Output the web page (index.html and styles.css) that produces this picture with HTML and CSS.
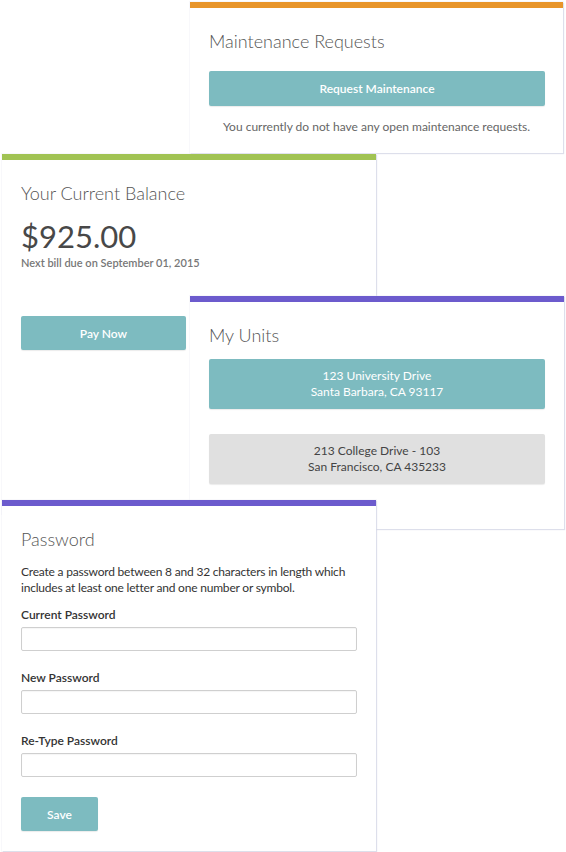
FILE: index.html
```html
<!DOCTYPE html>
<html>
<head>
<meta charset="utf-8">
<link rel="stylesheet" href="styles.css">
</head>
<body>
<div class="canvas">
  <section class="card card-maint">
    <h2 class="card-title">Maintenance Requests</h2>
    <button class="btn btn-wide">Request Maintenance</button>
    <p class="empty-note">You currently do not have any open maintenance requests.</p>
  </section>

  <section class="card card-balance">
    <h2 class="card-title">Your Current Balance</h2>
    <div class="amount">$925.00</div>
    <div class="due">Next bill due on September 01, 2015</div>
    <button class="btn btn-pay">Pay Now</button>
  </section>

  <section class="card card-units">
    <h2 class="card-title">My Units</h2>
    <div class="unit unit-active">123 University Drive<br>Santa Barbara, CA 93117</div>
    <div class="unit unit-other">213 College Drive - 103<br>San Francisco, CA 435233</div>
  </section>

  <section class="card card-password">
    <h2 class="card-title">Password</h2>
    <p class="desc">Create a password between 8 and 32 characters in length which includes at least one letter and one number or symbol.</p>
    <label class="field">
      <span class="field-label">Current Password</span>
      <input class="field-input" type="password">
    </label>
    <label class="field">
      <span class="field-label">New Password</span>
      <input class="field-input" type="password">
    </label>
    <label class="field">
      <span class="field-label">Re-Type Password</span>
      <input class="field-input" type="password">
    </label>
    <button class="btn btn-save">Save</button>
  </section>
</div>
</body>
</html>
```

FILE: styles.css
```css
* { box-sizing: border-box; }
html, body {
  margin: 0;
  padding: 0;
  background: #ffffff;
}
body {
  font-family: Lato, "Open Sans", sans-serif;
  color: #444;
  width: 566px;
  height: 852px;
  overflow: hidden;
}
.canvas {
  position: relative;
  width: 566px;
  height: 852px;
}
.card {
  position: absolute;
  background: #fff;
  border-top: 6px solid #999;
  padding: 21px 19px 0 19px;
  box-shadow: 1px 1px 1px rgba(210, 212, 228, 0.7), 0 0 0 1px rgba(235, 236, 244, 0.35);
  display: flex;
  flex-direction: column;
}
.card-maint {
  left: 190px;
  top: 2px;
  width: 373px;
  height: 151px;
  border-top-color: #e8952a;
  z-index: 1;
}
.card-balance {
  left: 2px;
  top: 154px;
  width: 374px;
  height: 360px;
  border-top-color: #a1c353;
  z-index: 2;
}
.card-units {
  left: 190px;
  top: 296px;
  width: 374px;
  height: 233px;
  border-top-color: #6c5bcd;
  z-index: 3;
}
.card-password {
  left: 2px;
  top: 500px;
  width: 374px;
  height: 351px;
  border-top-color: #6c5bcd;
  z-index: 4;
}
.card-title {
  margin: 0;
  font-size: 18px;
  line-height: 24px;
  font-weight: 300;
  color: #555;
}
.btn {
  border: 0;
  border-radius: 2px;
  background: #7dbbc0;
  color: #fff;
  font-family: Lato, "Open Sans", sans-serif;
  font-size: 12px;
  font-weight: 600;
  height: 35px;
  padding: 0;
  box-shadow: 0 1px 1px rgba(0, 0, 0, 0.08);
}
.btn-wide {
  width: 336px;
  margin-top: 18px;
}
.empty-note {
  margin: 13px 0 0 0;
  text-align: center;
  font-size: 12px;
  line-height: 16px;
  color: #666;
}
.amount {
  margin-top: 12px;
  font-size: 31px;
  line-height: 38px;
  font-weight: 400;
  color: #484848;
}
.due {
  margin-top: 0;
  font-size: 11px;
  line-height: 16px;
  color: #777;
  font-weight: 600;
}
.btn-pay {
  width: 165px;
  margin-top: 45px;
  height: 34px;
}
.unit {
  width: 336px;
  height: 50px;
  border-radius: 2px;
  font-size: 12px;
  line-height: 16px;
  text-align: center;
  display: flex;
  align-items: center;
  justify-content: center;
  box-shadow: 0 1px 1px rgba(0, 0, 0, 0.08);
}
.unit-active {
  margin-top: 12px;
  background: #7dbbc0;
  color: #fff;
}
.unit-other {
  margin-top: 25px;
  background: #e0e0e0;
  color: #444;
}
.desc {
  margin: 13px 0 0 0;
  font-size: 12px;
  line-height: 16px;
  color: #333;
  letter-spacing: -0.2px;
}
.field {
  display: flex;
  flex-direction: column;
  margin-top: 11px;
}
.field + .field {
  margin-top: 19px;
}
.field-label {
  font-size: 12px;
  line-height: 16px;
  font-weight: 600;
  color: #333;
}
.field-input {
  margin-top: 4px;
  width: 336px;
  height: 24px;
  border: 1px solid #cfcfcf;
  border-radius: 2px;
  background: #fff;
  box-shadow: inset 0 1px 1px rgba(0, 0, 0, 0.04);
  outline: none;
}
.btn-save {
  width: 77px;
  height: 34px;
  margin-top: 20px;
}
```
